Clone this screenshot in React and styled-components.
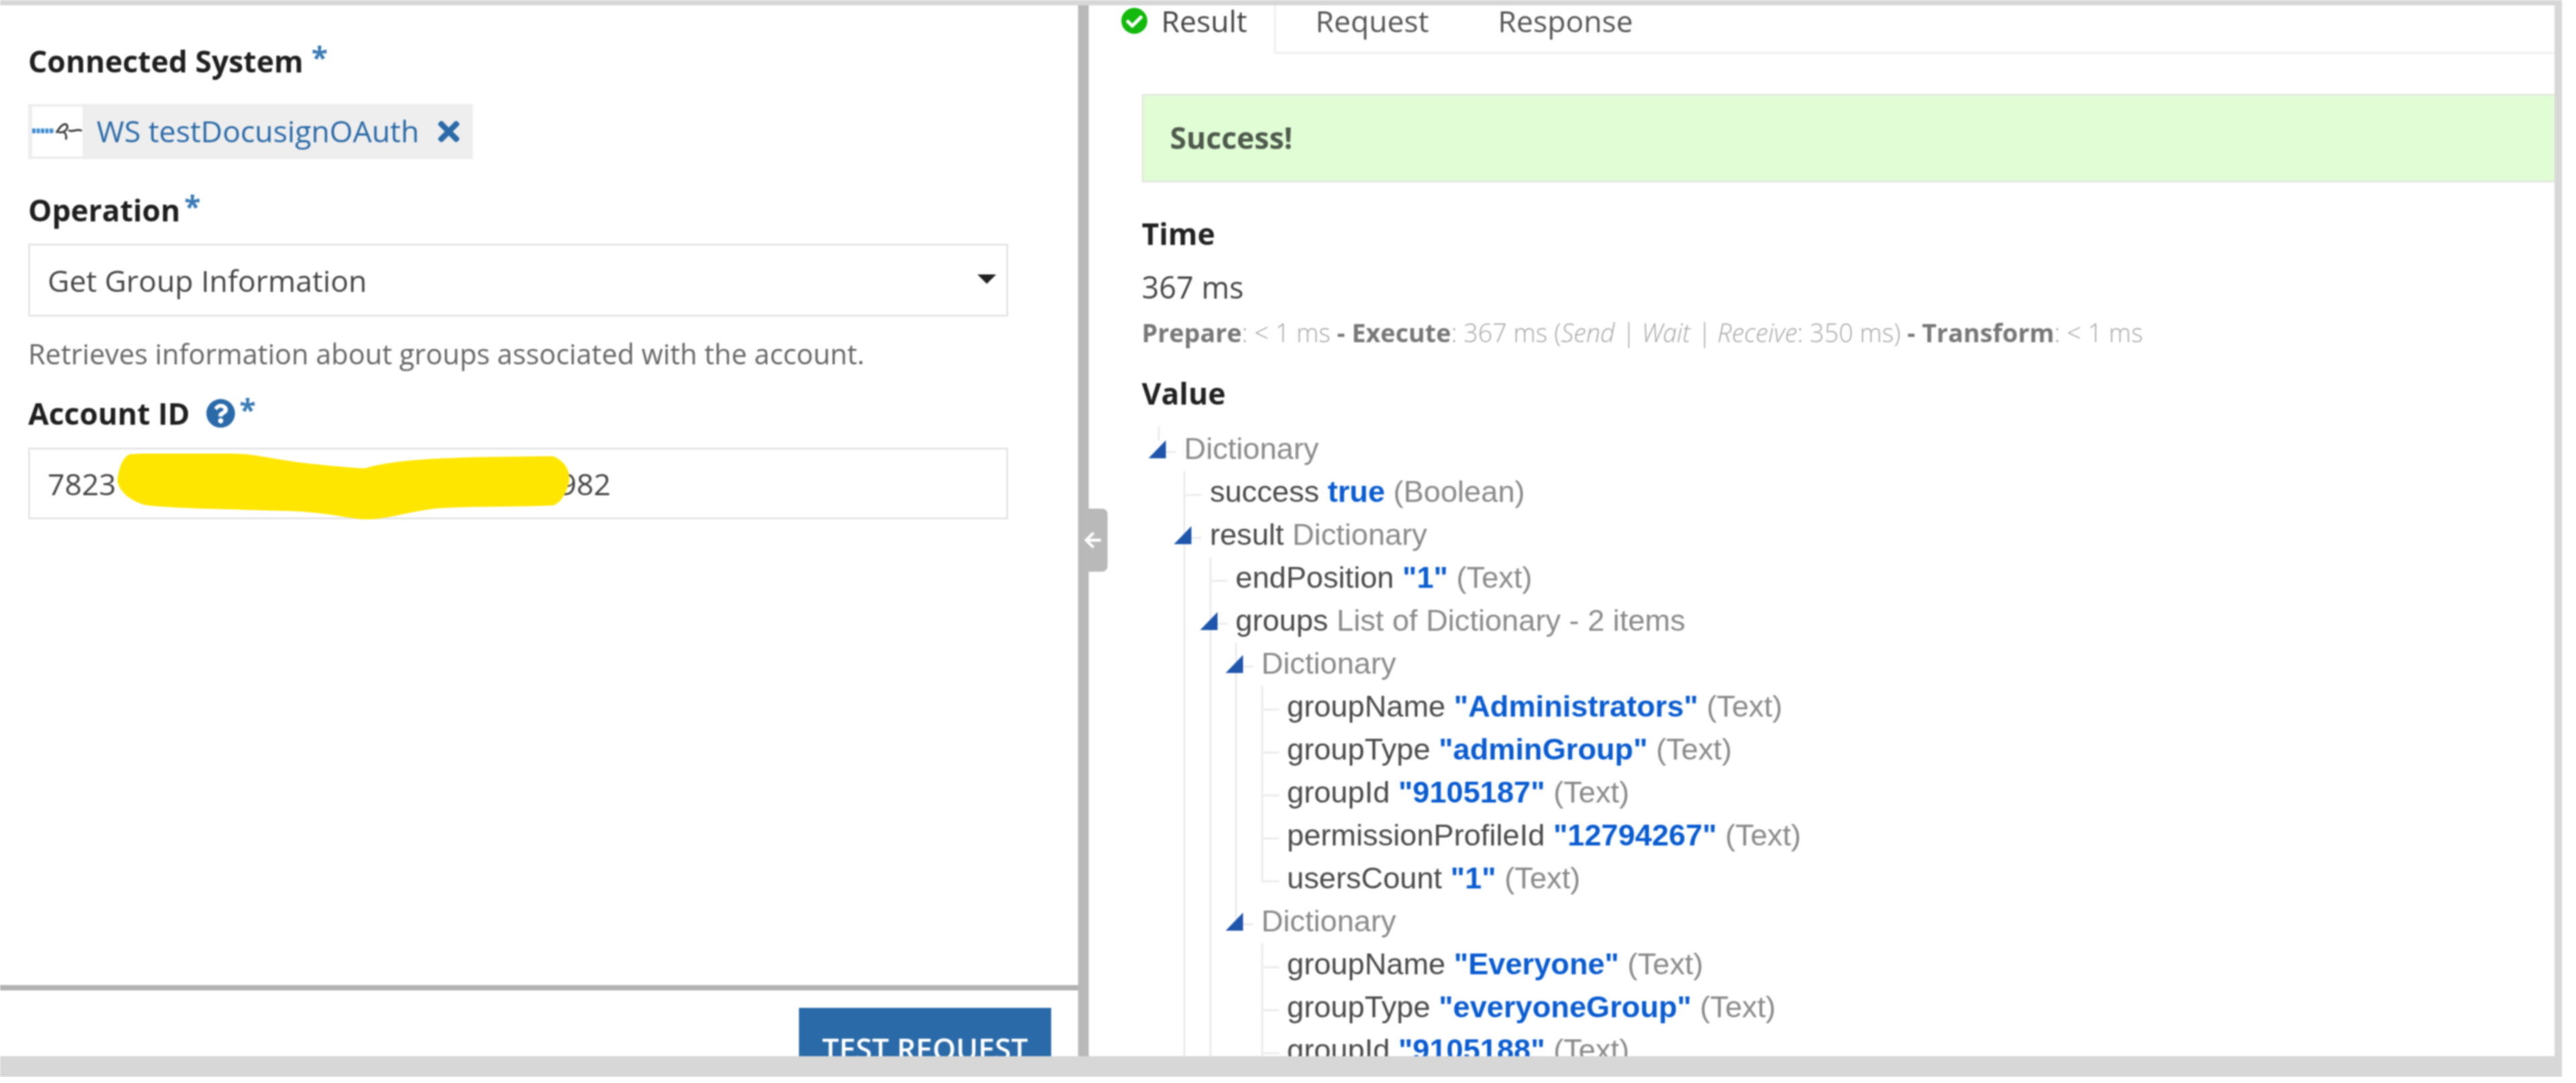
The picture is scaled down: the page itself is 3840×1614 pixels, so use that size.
import React from "react";
import styled, { createGlobalStyle } from "styled-components";
import { FaCheckCircle, FaQuestionCircle, FaTimes, FaArrowLeft } from "react-icons/fa";

const Global = createGlobalStyle`
  html, body { margin: 0; padding: 0; background: #fff; }
  body { font-family: "Open Sans", "Liberation Sans", sans-serif; }
  * { box-sizing: border-box; }
`;

const Frame = styled.div`
  width: 3819px;
  height: 1605px;
  background: #d7d7d7;
  padding: 8px 11px 31px 0;
  filter: blur(1px);
`;
const Window = styled.div`
  display: flex;
  height: 100%;
  background: #fff;
  overflow: hidden;
`;
const LeftPane = styled.section`
  width: 1607px;
  flex: none;
  display: flex;
  flex-direction: column;
`;
const Form = styled.div`
  height: 1468px;
  flex: none;
  padding: 53px 0 0 42px;
  border-bottom: 8px solid #b2b2b2;
`;
const Label = styled.div`
  font-size: 44.5px;
  font-weight: 700;
  line-height: 60px;
  height: 60px;
  color: #1f1f1f;
  margin-top: ${(p) => p.$top || 0}px;
  display: flex;
  align-items: center;
  white-space: pre;
`;
const Star = styled.span`
  color: #3a7ab5;
  font-weight: 700;
  margin-left: ${(p) => p.$left || 12}px;
  position: relative;
  top: -6px;
`;
const HelpIcon = styled(FaQuestionCircle)`
  color: #2a6aa8;
  width: 44px;
  height: 44px;
  margin-left: 24px;
`;
const Chip = styled.div`
  display: inline-flex;
  align-items: center;
  width: 663px;
  height: 82px;
  margin-top: 34px;
  background: #eeeeee;
  padding: 4px 0 4px 6px;
  color: #2a6aa8;
  font-size: 44.6px;
`;
const ChipLogo = styled.span`
  width: 75px;
  height: 74px;
  background: #fff;
  display: flex;
  align-items: center;
  flex: none;
`;
const ChipText = styled.span`
  margin: -3px 0 0 21px;
  white-space: nowrap;
  width: 507px;
  flex: none;
`;
const ChipClose = styled(FaTimes)`
  width: 36px;
  height: 46px;
  color: #2a6aa8;
`;
const Select = styled.div`
  margin-top: 20px;
  width: 1461px;
  height: 109px;
  border: 3px solid #e6e6e6;
  padding: 0 15px 0 26px;
  display: flex;
  align-items: center;
  justify-content: space-between;
  font-size: 44.6px;
  color: #444;
`;
const Caret = styled.span`
  width: 0;
  height: 0;
  border-style: solid;
  border-width: 14px 14px 0 14px;
  border-color: #222 transparent transparent transparent;
  margin-top: -4px;
`;
const Hint = styled.div`
  margin-top: 30px;
  line-height: 50px;
  height: 51px;
  font-size: 41.5px;
  color: #666;
`;
const Field = styled.div`
  position: relative;
  margin-top: 21px;
  width: 1461px;
  height: 107px;
  border: 3px solid #e6e6e6;
  padding-left: 26px;
  display: flex;
  align-items: center;
  gap: 661px;
  font-size: 44.6px;
  color: #444;
`;
const Scribble = styled.svg`
  position: absolute;
  left: 130px;
  top: 6px;
  width: 680px;
  height: 100px;
`;
const Footer = styled.div`
  flex: 1;
  min-height: 0;
  overflow: hidden;
  display: flex;
  justify-content: flex-end;
  padding: 26px 40px 0 0;
`;
const PrimaryButton = styled.button`
  width: 376px;
  height: 120px;
  flex: none;
  border: none;
  background: #2a6aa8;
  color: #fff;
  font-family: inherit;
  font-size: 44.5px;
  font-weight: 600;
`;
const Splitter = styled.div`
  position: relative;
  width: 16px;
  flex: none;
  background: #b9b9b9;
`;
const Handle = styled.div`
  position: absolute;
  left: 0;
  top: 750px;
  width: 44px;
  height: 94px;
  background: #b9b9b9;
  border-radius: 0 8px 8px 0;
  display: flex;
  align-items: center;
  justify-content: center;
  color: #fff;
  z-index: 2;
`;
const RightPane = styled.section`
  flex: 1;
  min-width: 0;
  overflow: hidden;
`;
const Tabs = styled.div`
  display: flex;
  height: 72px;
  font-size: 44.5px;
  line-height: 46px;
  color: #555;
`;
const ActiveTab = styled.div`
  width: 279px;
  flex: none;
  display: flex;
  align-items: center;
  gap: 20px;
  padding: 0 0 26px 48px;
  border-right: 3px solid #f0f0f0;
  color: #444;
  height: 72px;
`;
const TabIcon = styled(FaCheckCircle)`
  width: 40px;
  height: 40px;
  color: #13b90d;
  flex: none;
`;
const TabRest = styled.div`
  flex: 1;
  display: flex;
  align-items: center;
  gap: 103px;
  padding: 0 0 23px 59px;
  border-bottom: 3px solid #f0f0f0;
`;
const Tab = styled.span``;
const Content = styled.div`
  padding-left: 79px;
`;
const Banner = styled.div`
  margin-top: 60px;
  height: 132px;
  background: #e0fdd5;
  border: 3px solid #e3eadf;
  border-right: none;
  padding: 0 0 3px 39px;
  display: flex;
  align-items: center;
  font-size: 44.5px;
  font-weight: 700;
  color: #4e5a4c;
`;
const Heading = styled.div`
  margin-top: ${(p) => p.$top}px;
  font-size: 44.5px;
  font-weight: 700;
  line-height: 60px;
  color: #222;
`;
const Duration = styled.div`
  margin-top: 20px;
  font-size: 45px;
  line-height: 60px;
  color: #444;
`;
const Breakdown = styled.div`
  margin-top: 16px;
  font-size: 37.7px;
  line-height: 44px;
  color: #a6a6a6;
  font-weight: 300;
  white-space: nowrap;
  b { font-weight: 700; color: #777; }
  i { font-style: italic; }
`;
const Tree = styled.div`
  margin: 22px 0 0 24px;
  font-family: "Liberation Sans", Arial, sans-serif;
  font-size: 45.2px;
`;
const Item = styled.div`
  position: relative;
  &::before {
    content: "";
    position: absolute;
    left: 0;
    width: 3px;
    background: #ececec;
    top: ${(p) => (p.$root ? "-3px" : "0")};
    ${(p) => (p.$root ? "height: 22px;" : p.$end ? "height: 36px;" : "bottom: 0;")}
  }
`;
const Row = styled.div`
  position: relative;
  height: 64px;
  padding: 0 0 3px 39px;
  display: flex;
  align-items: center;
  white-space: pre;
  color: #4a4a4a;
  &::after {
    content: "";
    position: absolute;
    left: 0;
    top: 34px;
    width: 27px;
    height: 3px;
    background: #ececec;
  }
`;
const Toggle = styled.span`
  position: absolute;
  left: -14px;
  top: 18px;
  z-index: 1;
  width: 0;
  height: 0;
  border-style: solid;
  border-width: 0 0 27px 26px;
  border-color: transparent transparent #1f56ab transparent;
`;
const Kind = styled.span`
  color: #8a8a8a;
`;
const Val = styled.span`
  color: #0a5cd0;
  font-weight: 700;
`;
const Children = styled.div`
  margin-left: 38.4px;
`;

const dict = (label, extra, children, flags = {}) => ({ label, extra, children, ...flags });
const leaf = (label, value, kind, flags = {}) => ({ label, value, kind, ...flags });

const TREE = dict("", "Dictionary", [
  leaf("success", "true", "Boolean"),
  dict("result", "Dictionary", [
    leaf("endPosition", '"1"', "Text"),
    dict("groups", "List of Dictionary - 2 items", [
      dict("", "Dictionary", [
        leaf("groupName", '"Administrators"', "Text"),
        leaf("groupType", '"adminGroup"', "Text"),
        leaf("groupId", '"9105187"', "Text"),
        leaf("permissionProfileId", '"12794267"', "Text"),
        leaf("usersCount", '"1"', "Text", { end: true }),
      ]),
      dict("", "Dictionary", [
        leaf("groupName", '"Everyone"', "Text"),
        leaf("groupType", '"everyoneGroup"', "Text"),
        leaf("groupId", '"9105188"', "Text"),
      ], { end: true }),
    ]),
  ]),
], { root: true });

function Node({ node }) {
  const hasKids = !!node.children;
  return (
    <Item $root={node.root} $end={node.end}>
      <Row>
        {hasKids && <Toggle />}
        {node.label && <span>{node.label} </span>}
        {hasKids ? <Kind>{node.extra}</Kind> : (
          <>
            <Val>{node.value}</Val>
            <Kind> ({node.kind})</Kind>
          </>
        )}
      </Row>
      {hasKids && (
        <Children>
          {node.children.map((c, i) => <Node key={i} node={c} />)}
        </Children>
      )}
    </Item>
  );
}

function DocuSignMark() {
  return (
    <svg width="75" height="30" viewBox="0 0 75 30" aria-hidden="true">
      <path d="M0 14H33" stroke="#3b8ad0" strokeWidth="7" strokeDasharray="5 1.5" fill="none" />
      <path
        d="M36 17C40 10 44 5 48 4C53 4 54 9 50 13C46 17 40 17 38 15M46 15C50 17 52 22 50 27M54 13C60 17 66 10 74 14"
        stroke="#3d3d3d"
        strokeWidth="3"
        fill="none"
      />
    </svg>
  );
}

export default function App() {
  return (
    <>
      <Global />
      <Frame>
        <Window>
          <LeftPane>
            <Form>
              <Label>Connected System<Star>*</Star></Label>
              <Chip>
                <ChipLogo><DocuSignMark /></ChipLogo>
                <ChipText>WS testDocusignOAuth</ChipText>
                <ChipClose />
              </Chip>
              <Label $top={46}>Operation<Star $left={6}>*</Star></Label>
              <Select>
                <span>Get Group Information</span>
                <Caret />
              </Select>
              <Hint>Retrieves information about groups associated with the account.</Hint>
              <Label $top={33}>Account ID<HelpIcon /><Star $left={6}>*</Star></Label>
              <Field>
                <span>7823</span>
                <span>982</span>
                <Scribble viewBox="0 0 680 100" aria-hidden="true">
                  <path
                    d="M18 1 C60 -2 150 -2 192 1 C230 5 250 14 368 22 C420 8 480 5 650 4 C668 12 676 26 673 44 C668 62 660 74 650 77 C600 80 520 78 472 82 C430 88 395 99 368 98 C340 96 300 85 232 85 C150 82 90 82 44 77 C20 72 2 56 0 40 C2 20 8 6 18 1 Z"
                    fill="#ffe600"
                  />
                </Scribble>
              </Field>
            </Form>
            <Footer>
              <PrimaryButton>TEST REQUEST</PrimaryButton>
            </Footer>
          </LeftPane>
          <Splitter>
            <Handle><FaArrowLeft size={28} /></Handle>
          </Splitter>
          <RightPane>
            <Tabs>
              <ActiveTab><TabIcon /><span>Result</span></ActiveTab>
              <TabRest>
                <Tab>Request</Tab>
                <Tab>Response</Tab>
              </TabRest>
            </Tabs>
            <Content>
              <Banner>Success!</Banner>
              <Heading $top={46}>Time</Heading>
              <Duration>367 ms</Duration>
              <Breakdown>
                <b>Prepare</b>: &lt; 1 ms <b>- Execute</b>: 367 ms (<i>Send | Wait | Receive</i>: 350 ms) <b>- Transform</b>: &lt; 1 ms
              </Breakdown>
              <Heading $top={38}>Value</Heading>
              <Tree><Node node={TREE} /></Tree>
            </Content>
          </RightPane>
        </Window>
      </Frame>
    </>
  );
}
